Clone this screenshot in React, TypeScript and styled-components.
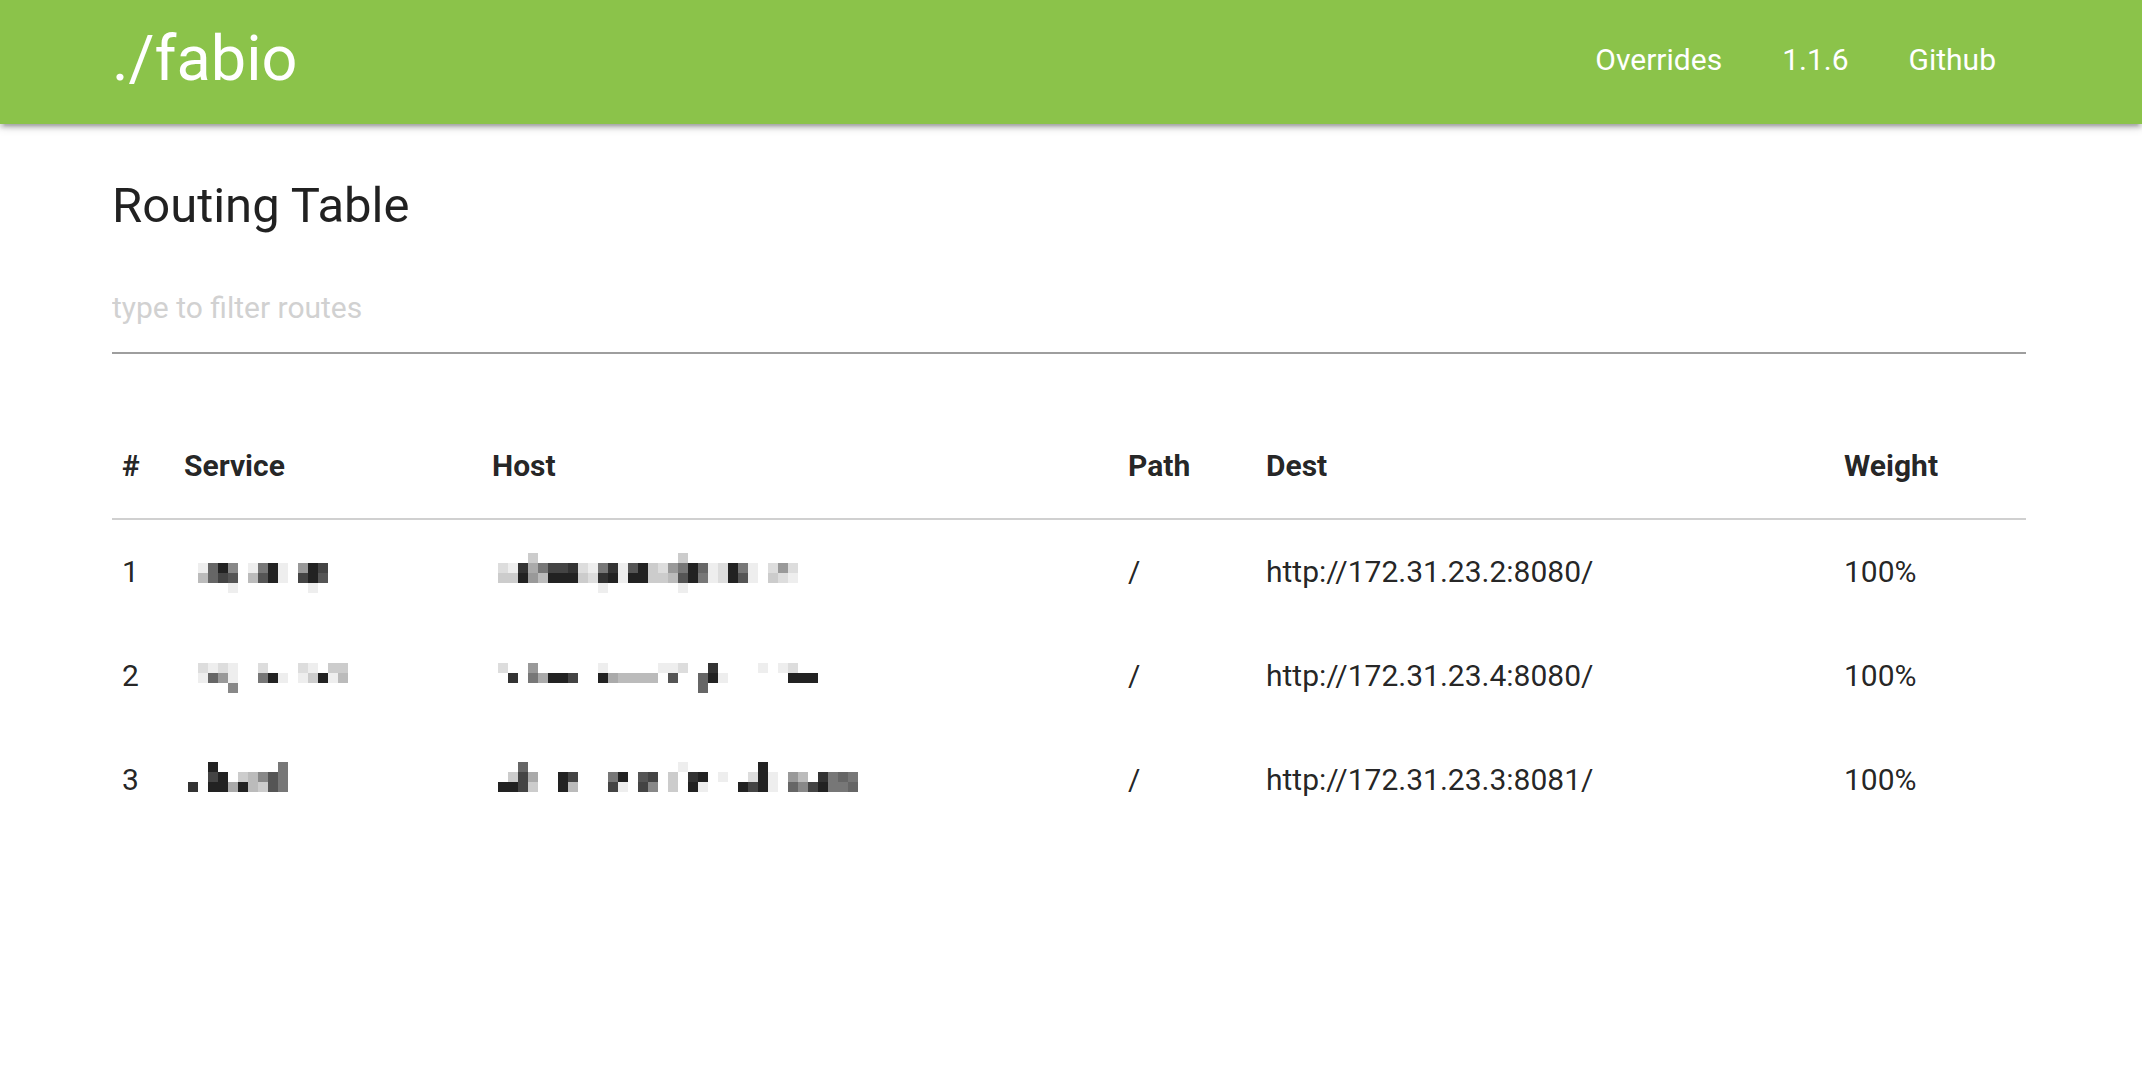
import React from 'react';
import styled, { createGlobalStyle } from 'styled-components';

const GlobalStyle = createGlobalStyle`
  html, body { margin: 0; padding: 0; background: #ffffff; }
  body {
    font-family: Roboto, "Noto Sans", "Liberation Sans", sans-serif;
    color: rgba(0, 0, 0, 0.87);
    font-size: 30px;
    line-height: 1.5;
  }
  * { box-sizing: border-box; }
`;

const NavBar = styled.nav`
  height: 124px;
  background: #8bc34a;
  color: #ffffff;
  box-shadow: 0 4px 4px 0 rgba(0, 0, 0, 0.14), 0 6px 2px -4px rgba(0, 0, 0, 0.12),
    0 2px 10px 0 rgba(0, 0, 0, 0.2);
`;

const NavInner = styled.div`
  height: 116px;
  padding: 0 116px 0 112px;
  display: flex;
  align-items: center;
  justify-content: space-between;
`;

const Brand = styled.a`
  font-size: 63px;
  line-height: 1;
  color: #ffffff;
  text-decoration: none;
`;

const NavLinks = styled.ul`
  list-style: none;
  margin: 3px 0 0;
  padding: 0;
  display: flex;
`;

const NavLink = styled.a`
  display: block;
  padding: 0 30px;
  font-size: 30px;
  line-height: 60px;
  color: #ffffff;
  text-decoration: none;
`;

const Container = styled.main`
  padding: 0 116px 0 112px;
`;

const Title = styled.h5`
  font-size: 49px;
  font-weight: 400;
  line-height: 54px;
  margin: 55px 0 29px;
`;

const FilterInput = styled.input`
  display: block;
  width: 100%;
  height: 90px;
  box-sizing: content-box;
  padding: 0;
  margin: 0 0 60px;
  border: none;
  border-bottom: 2px solid #9e9e9e;
  background: transparent;
  outline: none;
  font-family: inherit;
  font-size: 30px;
  color: rgba(0, 0, 0, 0.87);
  &::placeholder { color: #d1d1d1; }
`;

const Table = styled.table`
  width: 100%;
  border-collapse: collapse;
  table-layout: fixed;
`;

const Head = styled.thead`
  border-bottom: 2px solid #d0d0d0;
`;

const Th = styled.th`
  padding: 30px 10px;
  line-height: 44px;
  text-align: left;
  vertical-align: middle;
  font-weight: 700;
`;

const Td = styled.td`
  padding: 30px 10px;
  line-height: 44px;
  text-align: left;
  vertical-align: middle;
`;

const Mosaic = styled.svg<{ $dx: number }>`
  display: block;
  margin-left: ${(p) => p.$dx}px;
  overflow: visible;
  shape-rendering: crispEdges;
`;

type Redacted = { dx: number; dy: number; rows: string[] };

const Pixelated: React.FC<Redacted> = ({ dx, dy, rows }) => {
  const cols = Math.max(...rows.map((r) => r.length));
  return (
    <Mosaic $dx={dx} width={cols * 10} height={44} viewBox={`0 0 ${cols * 10} 44`}>
      {rows.flatMap((row, ri) =>
        row.split('').map((c, ci) =>
          c === 'f' ? null : (
            <rect
              key={`${ri}-${ci}`}
              x={ci * 10}
              y={dy + ri * 10}
              width={10}
              height={10}
              fill={`#${c}${c}${c}`}
            />
          )
        )
      )}
    </Mosaic>
  );
};

const routes: {
  n: number;
  service: Redacted;
  host: Redacted;
  path: string;
  dest: string;
  weight: string;
}[] = [
  {
    n: 1,
    service: { dx: 14, dy: 13, rows: ['e628fe72ef924', 'b645fb52ef425', 'fffefffffffef'] },
    host: {
      dx: 6,
      dy: 3,
      rows: [
        'fffcffffffffffffffcfffffffffff',
        'de3a7443de73e52cd9726ed27efd9d',
        'cc29b222cd32e22ccb527ed25efcde',
        'ffffffffffefffffffefffffffffff',
      ],
    },
    path: '/',
    dest: 'http://172.31.23.2:8080/',
    weight: '100%',
  },
  {
    n: 2,
    service: { dx: 14, dy: 9, rows: ['dedeffdfffdefcc', 'e69eff72efec2eb', 'fff8fffffffffff'] },
    host: {
      dx: 6,
      dy: 9,
      rows: [
        'dff9ffffffefffffeedff3ffffefedff',
        'f3f7a224ff2abbbbf5ff62effffff222',
        'ffffffffffffffffffff6fffffffffff',
      ],
    },
    path: '/',
    dest: 'http://172.31.23.4:8080/',
    weight: '100%',
  },
  {
    n: 3,
    service: { dx: 4, dy: 4, rows: ['ff2ffffff7', 'ff42fcb857', '3f22a2bc57'] },
    host: {
      dx: 6,
      dy: 4,
      rows: [
        'ff6fffffffffffffffefffffff2fffffffff',
        'fc4aff24fff72f54fcf32feffd2ef9bf3767',
        '224cff2bfff4ef48fcf2efff242ef6842776',
      ],
    },
    path: '/',
    dest: 'http://172.31.23.3:8081/',
    weight: '100%',
  },
];

const columns = [
  { label: '#', width: 62 },
  { label: 'Service', width: 308 },
  { label: 'Host', width: 636 },
  { label: 'Path', width: 138 },
  { label: 'Dest', width: 578 },
  { label: 'Weight', width: 192 },
];

export default function App() {
  return (
    <>
      <GlobalStyle />
      <NavBar>
        <NavInner>
          <Brand href="#">./fabio</Brand>
          <NavLinks>
            <li><NavLink href="#">Overrides</NavLink></li>
            <li><NavLink href="#">1.1.6</NavLink></li>
            <li><NavLink href="#">Github</NavLink></li>
          </NavLinks>
        </NavInner>
      </NavBar>
      <Container>
        <Title>Routing Table</Title>
        <FilterInput type="text" placeholder="type to filter routes" />
        <Table>
          <colgroup>
            {columns.map((c) => (
              <col key={c.label} style={{ width: c.width }} />
            ))}
          </colgroup>
          <Head>
            <tr>
              {columns.map((c) => (
                <Th key={c.label}>{c.label}</Th>
              ))}
            </tr>
          </Head>
          <tbody>
            {routes.map((r) => (
              <tr key={r.n}>
                <Td>{r.n}</Td>
                <Td><Pixelated {...r.service} /></Td>
                <Td><Pixelated {...r.host} /></Td>
                <Td>{r.path}</Td>
                <Td>{r.dest}</Td>
                <Td>{r.weight}</Td>
              </tr>
            ))}
          </tbody>
        </Table>
      </Container>
    </>
  );
}
